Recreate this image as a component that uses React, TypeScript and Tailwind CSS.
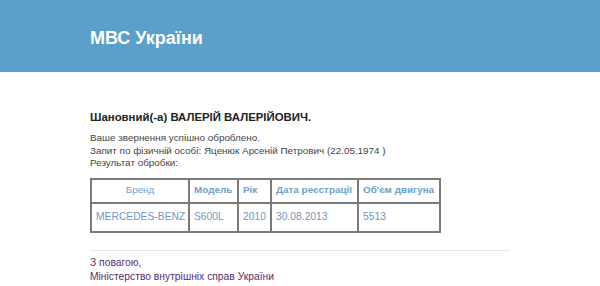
export default function App() {
  const cols = ['Бренд', 'Модель', 'Рік', 'Дата реєстрації', "Об'єм двигуна"]
  const row = ['MERCEDES-BENZ', 'S600L', '2010', '30.08.2013', '5513']
  const widths = ['w-[98px]', 'w-[49px]', 'w-[33px]', 'w-[87px]', 'w-[82px]']
  const aligns = ['text-center', 'text-left', 'text-center', 'text-left', 'text-left']

  return (
    <div className="w-[600px] h-[286px] bg-white overflow-hidden font-['Liberation_Sans',Arial,sans-serif]">
      {/* Header */}
      <div className="h-[72px] bg-[#5aa0cb] px-[90px] pt-[28px]">
        <h1 className="text-[18px] font-bold text-white leading-[20px]">МВС України</h1>
      </div>

      <div className="px-[90px] pt-[37px]">
        <h2 className="text-[11.4px] font-bold text-[#222] leading-[16px]">Шановний(-а) ВАЛЕРІЙ ВАЛЕРІЙОВИЧ.</h2>

        <div className="mt-[7px] text-[9.9px] leading-[12.5px] text-[#444]">
          <p>Ваше звернення успішно оброблено.</p>
          <p>Запит по фізичній особі: Яценюк Арсеній Петрович (22.05.1974 )</p>
          <p>Результат обробки:</p>
        </div>

        {/* Results table */}
        <table className="mt-[8px] w-[349px] table-fixed border-collapse border-2 border-[#7a7a7a]">
          <colgroup>
            {widths.map((w, i) => (
              <col key={i} className={w} />
            ))}
          </colgroup>
          <thead>
            <tr className="h-[24px]">
              {cols.map((c, i) => (
                <th
                  key={c}
                  className={`border-2 border-[#7a7a7a] px-[4px] text-[9.9px] text-[#6d9fcb] whitespace-nowrap ${i === 0 ? 'text-center font-normal' : 'text-left font-bold'}`}
                >
                  {c}
                </th>
              ))}
            </tr>
          </thead>
          <tbody>
            <tr className="h-[29px]">
              {row.map((v, i) => (
                <td
                  key={v}
                  className={`border-2 border-[#7a7a7a] px-[4px] text-[10.3px] text-[#7496c0] whitespace-nowrap ${aligns[i]}`}
                >
                  {v}
                </td>
              ))}
            </tr>
          </tbody>
        </table>

        <div className="mt-[17px] w-[420px] border-t border-[#e6e6e6]" />

        <div className="mt-[5px] text-[10.3px] leading-[14px] text-[#5a2b6e]">
          <p>З повагою,</p>
          <p>Міністерство внутрішніх справ України</p>
        </div>
      </div>
    </div>
  )
}
